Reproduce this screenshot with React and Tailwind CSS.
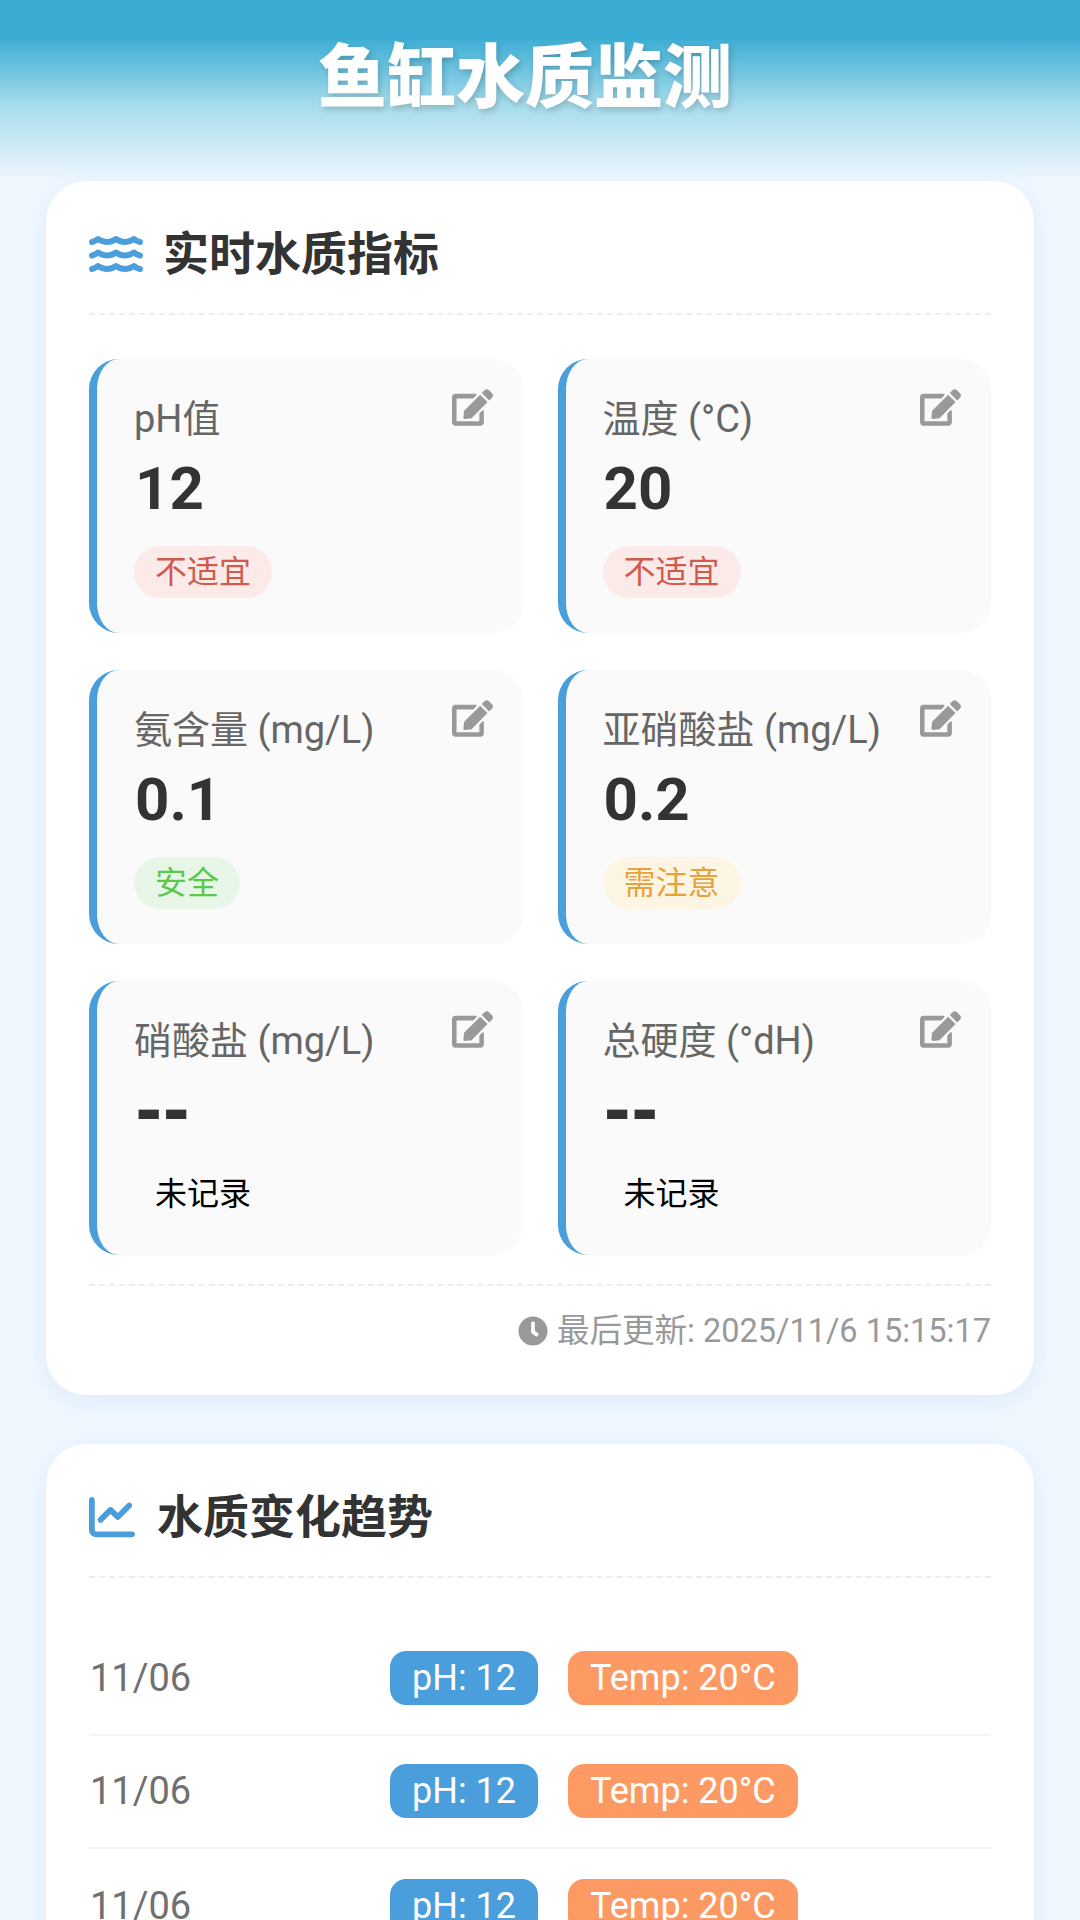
import React from "react";
import { FaEdit, FaClock } from "react-icons/fa";
import { FaWater, FaChartLine } from "react-icons/fa6";

const FONT = "font-['Roboto','Noto_Sans_CJK_SC','Noto_Sans',sans-serif]";

const metrics = [
  { label: "pH值", value: "12", tag: "不适宜", tagClass: "bg-[#fbeae8] text-[#cf5a4e]" },
  { label: "温度 (°C)", value: "20", tag: "不适宜", tagClass: "bg-[#fbeae8] text-[#cf5a4e]" },
  { label: "氨含量 (mg/L)", value: "0.1", tag: "安全", tagClass: "bg-[#e8f6e8] text-[#5cc84a]" },
  { label: "亚硝酸盐 (mg/L)", value: "0.2", tag: "需注意", tagClass: "bg-[#fdf5e3] text-[#e6a23c]" },
  { label: "硝酸盐 (mg/L)", value: "--", tag: "未记录", tagClass: "text-black" },
  { label: "总硬度 (°dH)", value: "--", tag: "未记录", tagClass: "text-black" },
];

function Metric({ m }) {
  const dash = m.value === "--";
  return (
    <div className="relative h-[274px] rounded-[30px] border-l-[8px] border-[#4a9edb] bg-[#fafafa] pl-[37px] pt-[35px]">
      <FaEdit className="absolute right-[30px] top-[28px] h-[41px] w-[41px] text-[#999999]" />
      <div className="text-[38px] leading-[50px] text-[#666666]">{m.label}</div>
      <div className={`mt-[12px] pl-[1px] font-bold leading-[66px] text-[#333333] ${dash ? "font-['DejaVu_Sans'] text-[66px]" : "text-[60px]"}`}>{m.value}</div>
      <div className={`mt-[24px] inline-block rounded-[26px] px-[21px] text-[32px] leading-[52px] ${m.tagClass}`}>{m.tag}</div>
    </div>
  );
}

function Title({ icon, gap, children }) {
  return (
    <div className={`flex h-[134px] items-center border-b-2 border-dashed border-[#eaeef2] pt-[14px] ${gap}`}>
      {icon}
      <h2 className="text-[46px] font-bold leading-[56px] text-[#333333]">{children}</h2>
    </div>
  );
}

function Row({ last }) {
  return (
    <div className={`flex h-[113.5px] items-center ${last ? "" : "border-b-2 border-[#f2f4f6]"}`}>
      <div className="w-[301px] pl-[1px] pt-[1px] text-[38px] text-[#707070]">11/06</div>
      <div className="rounded-[16px] bg-[#4a9edb] px-[22px] text-[36px] leading-[54px] text-white">pH: 12</div>
      <div className="ml-[30px] rounded-[16px] bg-[#fd9a63] px-[22px] text-[36px] leading-[54px] text-white">Temp: 20°C</div>
    </div>
  );
}

export default function App() {
  return (
    <div className={`h-[1920px] overflow-hidden bg-[#f0f7ff] ${FONT}`}>
      <header className="flex h-[181px] justify-center bg-[linear-gradient(to_bottom,#3aacd3_0%,#3aacd3_20%,#a6dcec_58%,#f0f7ff_100%)] pr-[30px] pt-[33px]">
        <h1 className="text-[69px] font-black leading-[92px] text-white [text-shadow:2px_3px_6px_rgba(0,0,0,0.18)]">鱼缸水质监测</h1>
      </header>
      <main className="px-[46px]">
        <section className="h-[1214px] rounded-[40px] bg-white px-[43px] shadow-[0_6px_24px_rgba(74,158,219,0.12)]">
          <Title gap="gap-[20px]" icon={<FaWater className="h-[54px] w-[54px] text-[#4a9edb]" />}>实时水质指标</Title>
          <div className="mt-[44px] grid grid-cols-2 gap-x-[35px] gap-y-[37px]">
            {metrics.map((m) => <Metric key={m.label} m={m} />)}
          </div>
          <div className="mt-[29px] flex h-[92px] items-center justify-end gap-[9px] border-t-2 border-dashed border-[#eaeef2] text-[32.5px] text-[#999999]">
            <FaClock className="h-[30px] w-[30px]" />
            <span>最后更新: 2025/11/6 15:15:17</span>
          </div>
        </section>
        <section className="mt-[49px] h-[700px] rounded-[40px] bg-white px-[43px] shadow-[0_6px_24px_rgba(74,158,219,0.12)]">
          <Title gap="gap-[22px]" icon={<FaChartLine className="h-[46px] w-[46px] text-[#4a9edb]" />}>水质变化趋势</Title>
          <div className="mt-[44px]">
            <Row /><Row /><Row last />
          </div>
        </section>
      </main>
    </div>
  );
}
